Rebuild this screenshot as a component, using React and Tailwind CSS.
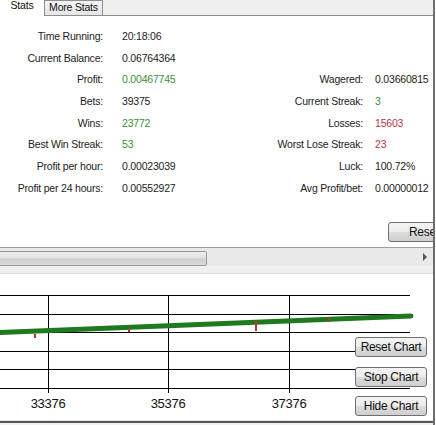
import React from 'react';

const left = [
  ['Time Running:', '20:18:06'],
  ['Current Balance:', '0.06764364'],
  ['Profit:', '0.00467745', 'g'],
  ['Bets:', '39375'],
  ['Wins:', '23772', 'g'],
  ['Best Win Streak:', '53', 'g'],
  ['Profit per hour:', '0.00023039'],
  ['Profit per 24 hours:', '0.00552927'],
];

const right = [
  null,
  null,
  ['Wagered:', '0.03660815'],
  ['Current Streak:', '3', 'g'],
  ['Losses:', '15603', 'r'],
  ['Worst Lose Streak:', '23', 'r'],
  ['Luck:', '100.72%'],
  ['Avg Profit/bet:', '0.00000012'],
];

const tone = (t) => (t === 'g' ? 'text-[#3b8f3b]' : t === 'r' ? 'text-[#b23a48]' : 'text-[#222]');

const WinButton = ({ children, className = '' }) => (
  <div className={`flex items-center justify-center h-[20px] border border-[#707070] rounded-[3px] bg-[linear-gradient(#f4f4f4_0%,#ececec_48%,#dcdcdc_52%,#cfcfcf_100%)] text-[12px] tracking-[-0.3px] text-[#111] ${className}`}>
    {children}
  </div>
);

export default function App() {
  return (
    <div className="w-[436px] h-[425px] bg-white overflow-hidden font-['Liberation_Sans',Arial,sans-serif] text-[10.5px] tracking-[-0.2px]">
      <div className="w-[435px] h-[425px] border-r-2 border-[#6e6e6e] flex flex-col overflow-hidden">
        {/* tab strip */}
        <div className="h-[16px] shrink-0 bg-[#efefef] border-b border-[#8d8d8d] flex items-end relative">
          <div className="w-[44px] h-[17px] bg-white flex items-center justify-center pb-[3px] relative z-10 -mb-[1px] text-[#111]">Stats</div>
          <div className="w-[59px] h-[15px] border border-b-0 border-[#8d8d8d] bg-[linear-gradient(#f3f3f3,#e6e6e6)] flex items-center justify-center text-[#111]">More Stats</div>
        </div>

        {/* stats panel */}
        <div className="h-[232px] shrink-0 bg-white border-b border-[#a0a0a0] flex flex-col">
          <div className="grid grid-cols-[103px_150px_110px_1fr] auto-rows-[21.7px] items-center mt-[10px] text-[#222]">
            {left.map((l, i) => (
              <React.Fragment key={i}>
                <div className="text-right whitespace-nowrap">{l[0]}</div>
                <div className={`pl-[19px] ${tone(l[2])}`}>{l[1]}</div>
                <div className="text-right whitespace-nowrap">{right[i] ? right[i][0] : ''}</div>
                <div className={`pl-[12px] whitespace-nowrap ${right[i] ? tone(right[i][2]) : ''}`}>{right[i] ? right[i][1] : ''}</div>
              </React.Fragment>
            ))}
          </div>
          <div className="mt-[22px] ml-[388px] w-[70px]">
            <WinButton className="justify-start pl-[20px]">Reset</WinButton>
          </div>
        </div>

        {/* scrollbar */}
        <div className="h-[18px] shrink-0 bg-[#e9e9e9] flex items-center relative">
          <div className="w-[207px] h-[15px] mt-[2px] border border-l-0 border-[#999] rounded-r-[2px] bg-[linear-gradient(#f0f0f0_0%,#e2e2e2_45%,#cfcfcf_55%,#dadada_100%)]" />
          <div className="absolute right-[6px] top-[5px] w-0 h-0 border-y-[4px] border-y-transparent border-l-[4px] border-l-[#555]" />
        </div>
        <div className="h-[8px] shrink-0 bg-[#f0f0f0] border-b border-[#dcdcdc]" />

        {/* chart */}
        <div className="h-[146px] shrink-0 bg-white relative">
          <svg width="433" height="146" className="absolute inset-0">
            {[21, 40, 58, 77, 95, 114].map((y) => (
              <line key={y} x1="0" x2="410" y1={y + 0.5} y2={y + 0.5} stroke="#000" strokeWidth="1" />
            ))}
            {[48, 168, 289].map((x) => (
              <line key={x} x1={x + 0.5} x2={x + 0.5} y1="21" y2="119" stroke="#000" strokeWidth="1" />
            ))}
            <line x1="0" y1="58.5" x2="411" y2="42" stroke="#1f7a1f" strokeWidth="5" strokeLinecap="round" />
            <g stroke="#b03a2a" strokeWidth="2">
              <line x1="35" x2="35" y1="60" y2="64" />
              <line x1="129" x2="129" y1="54" y2="58" />
              <line x1="256" x2="256" y1="46" y2="57" />
              <line x1="329" x2="329" y1="43" y2="48" />
            </g>
            {[[48, '33376'], [168, '35376'], [289, '37376']].map(([x, t]) => (
              <text key={t} x={x} y="134" textAnchor="middle" fontSize="13" fill="#111" fontFamily="Liberation Sans, Arial, sans-serif" letterSpacing="-0.3">{t}</text>
            ))}
          </svg>
          <WinButton className="absolute left-[355px] top-[63px] w-[72px]">Reset Chart</WinButton>
          <WinButton className="absolute left-[355px] top-[93px] w-[72px]">Stop Chart</WinButton>
          <WinButton className="absolute left-[355px] top-[122px] w-[72px]">Hide Chart</WinButton>
        </div>
        <div className="h-[1px] shrink-0 bg-[#e6e6e6]" />
        <div className="h-[2px] shrink-0 bg-[#555]" />
        <div className="flex-1 bg-[#f2f2f2]" />
      </div>
    </div>
  );
}
